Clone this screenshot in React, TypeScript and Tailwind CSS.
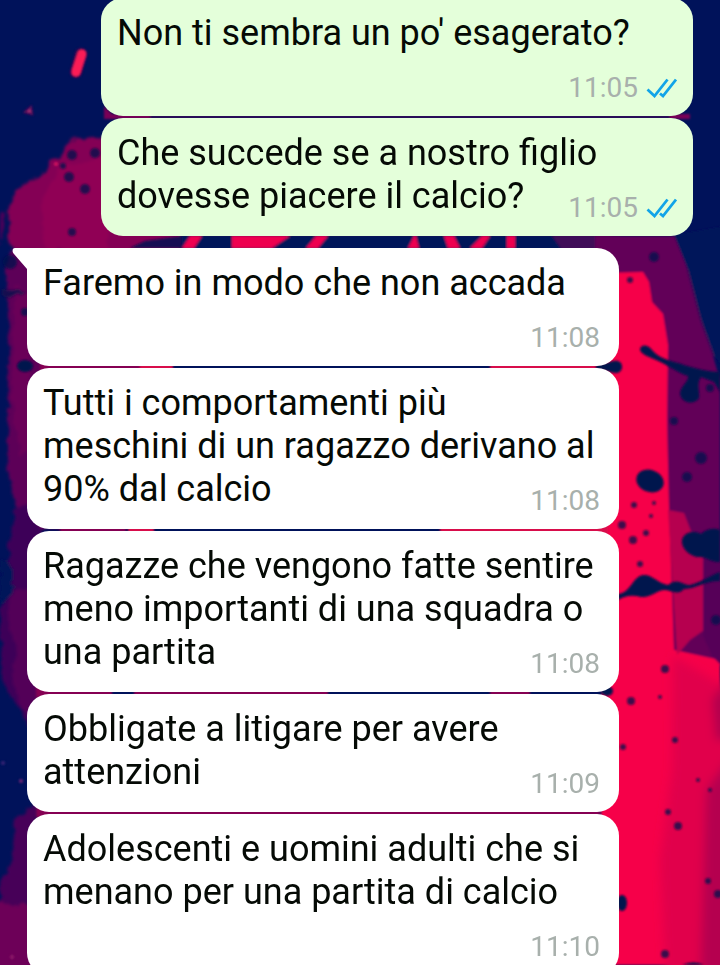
import React from 'react';
import clsx from 'clsx';

type Message = {
  text: string;
  time: string;
  sent?: boolean;
  first?: boolean;
};

const messages: Message[] = [
  { text: "Non ti sembra un po' esagerato?", time: '11:05', sent: true },
  {
    text: 'Che succede se a nostro figlio dovesse piacere il calcio?',
    time: '11:05',
    sent: true,
  },
  { text: 'Faremo in modo che non accada', time: '11:08', first: true },
  {
    text: 'Tutti i comportamenti più meschini di un ragazzo derivano al 90% dal calcio',
    time: '11:08',
  },
  {
    text: 'Ragazze che vengono fatte sentire meno importanti di una squadra o una partita',
    time: '11:08',
  },
  { text: 'Obbligate a litigare per avere attenzioni', time: '11:09' },
  {
    text: 'Adolescenti e uomini adulti che si menano per una partita di calcio',
    time: '11:10',
  },
];

// x, y, radius
const drops = [
  [72, 155, 5], [95, 153, 5], [63, 166, 3], [69, 177, 5], [85, 189, 5],
  [72, 232, 4], [654, 257, 5], [630, 280, 3], [674, 421, 4], [701, 458, 6],
  [687, 477, 5], [634, 505, 3], [654, 503, 2], [651, 516, 2], [622, 525, 4],
  [646, 533, 3], [633, 540, 4], [640, 564, 3], [716, 620, 5], [665, 669, 4],
  [631, 701, 4], [660, 697, 2], [675, 740, 3], [623, 747, 3], [668, 812, 3],
  [678, 826, 4], [698, 780, 2], [710, 790, 2], [708, 881, 3], [718, 894, 4],
  [665, 954, 4], [10, 262, 7], [25, 312, 4], [710, 388, 4],
];

const Wallpaper = () => (
  <svg
    className="absolute inset-0 h-full w-full"
    viewBox="0 0 720 965"
    preserveAspectRatio="xMidYMin slice"
    aria-hidden="true"
  >
    <defs>
      <filter id="rough" x="-5%" y="-5%" width="110%" height="110%">
        <feTurbulence type="fractalNoise" baseFrequency="0.07" numOctaves="3" seed="4" />
        <feDisplacementMap in="SourceGraphic" scale="12" xChannelSelector="R" yChannelSelector="G" />
        <feGaussianBlur stdDeviation="1.4" />
      </filter>
      <filter id="soft">
        <feGaussianBlur stdDeviation="0.9" />
      </filter>
      <filter id="haze">
        <feGaussianBlur stdDeviation="5" />
      </filter>
    </defs>
    <rect width="720" height="965" fill="#00125a" />

    <g filter="url(#rough)">
      <path d="M12 300 8 206 24 184 40 178 46 164 60 158 68 142 104 136H610V300Z" fill="#840055" />
      <path d="M60 166 90 162 108 154V250H44L42 200Z" fill="#900055" />
      <path d="M0 212 5 214 4 238 0 244Z" fill="#4c0058" />
      <path d="M8 250H60V530H24L12 490 8 460Z" fill="#5d0058" />
      <path d="M14 285 30 290V450L20 455 12 400Z" fill="#6b0058" />
      <path d="M14 510 40 500V745L24 720 14 700 4 690 0 640V575L8 560Z" fill="#3c0058" />
      <path d="M8 590H40V730L20 706 12 680 18 650 6 620Z" fill="#520058" />
      <path d="M16 820 36 800V902L0 906V880L10 870Z" fill="#470058" />
      <path d="M-8 904H50V980H-8Z" fill="#6d0058" />
      <path d="M0 560 12 570 14 592 0 604Z" fill="#00125a" />
      <path d="M2 288 28 290 12 298 2 296Z" fill="#13104f" />
    </g>

    <g filter="url(#soft)">
      <path d="M104 106 112 114H690V119H104Z" fill="#790057" />
      <path d="M150 114H670V119H150Z" fill="#2c0e58" />
      <path d="M180 235H620V250H180Z" fill="#00125a" />
      <path d="M182 248 190 236H202L194 248ZM232 236H290L272 248H232ZM306 248 316 236H328L318 248ZM408 248 414 236H416L419 248ZM444 236H454L460 248H448ZM470 248 482 236H490L482 248ZM507 236H515V248H507Z" fill="#ee0650" />
      <path d="M130 248 145 241 182 236V248Z" fill="#121052" />
      <path d="M552 236H600V250H562Z" fill="#3f0b58" />
      <path d="M595 236H684L687 270 700 320 713 356 720 380V660H595Z" fill="#620059" />
      <path d="M685 236 688 270 701 320 714 356" fill="none" stroke="#941052" strokeWidth="1" />
      <path d="M605 273 643 272 649 282 652 302 663 314 668 345 667 420 669 510 674 650 720 660V965H600Z" fill="#f60249" />
      <path d="M674 235 730 225V375L714 356 701 320 688 270Z" fill="#00125a" />
      <path d="M668 510 684 513 692 534 703 546 704 630 690 640 677 655Z" fill="#b6044f" />
      <path d="M703 540H730V675L712 656 703 636Z" fill="#570059" />
      {/* streaks showing between the bubbles */}
      <path d="M40 360H140V372H40ZM60 522H126V534H60ZM36 684H112V698H36ZM134 684H328V698H134ZM490 684H530V698H490ZM36 804H600V818H36Z" fill="#850652" />
      <path d="M140 360H173V372H140ZM490 360H608V372H490ZM128 522H154V534H128ZM440 522H608V534H440Z" fill="#d8104c" />
    </g>

    <g filter="url(#haze)">
      <path d="M673 656 730 690V985H666L660 860 672 770Z" fill="#e1034c" />
      <path d="M706 790 735 750V985H700Z" fill="#b5034f" />
      <path d="M712 700 735 670V740H716Z" fill="#b2034d" />
    </g>

    <g fill="#02124e" filter="url(#soft)">
      <path d="M640 350C640 344 648 344 652 350 660 360 674 361 684 365 698 369 709 372 720 372V392L714 382 701 377C696 384 700 391 699 398 695 405 682 404 680 394 680 386 689 382 688 376 678 373 668 365 656 360 648 356 642 355 640 350Z" />
      <ellipse cx="650" cy="481" rx="14" ry="11" transform="rotate(20 650 481)" />
      <path d="M682 540C684 532 694 530 701 534 707 528 715 528 720 530V562C709 562 706 556 699 557 691 557 681 549 682 540Z" />
      <path d="M618 594C631 593 632 577 643 575 652 574 657 583 668 585 678 577 682 585 690 585 704 581 711 575 720 572V581C707 580 698 588 684 589 678 596 671 590 664 590 655 591 651 598 641 597 633 595 626 595 618 600Z" />
      <path d="M596 364C608 365 613 358 620 362 624 366 622 373 616 373 608 373 603 368 596 370Z" />
      <ellipse cx="25" cy="366" rx="8" ry="6" />
      <ellipse cx="622" cy="903" rx="5" ry="8" />
      <ellipse cx="607" cy="691" rx="6" ry="5" />
      <path d="M682 965Q694 960 704 965Z" />
      {drops.map(([x, y, r]) => (
        <circle key={`${x}-${y}`} cx={x} cy={y} r={r} opacity="0.75" />
      ))}
    </g>

    <g filter="url(#soft)">
      <path d="M81 54 76 72" stroke="#40084f" strokeWidth="12" strokeLinecap="round" />
      <path d="M82 54 76 72" stroke="#fb1a56" strokeWidth="9" strokeLinecap="round" />
      <path d="M25 112 31 107 32 114Z" fill="#b03a7c" stroke="#5e0b59" strokeWidth="2" />
      <circle cx="56" cy="164" r="2" fill="#d71b60" />
      <circle cx="21" cy="781" r="2" fill="#702573" />
      <circle cx="3" cy="763" r="2" fill="#382474" />
      <circle cx="12" cy="957" r="2" fill="#91206a" />
    </g>
  </svg>
);

const ReadTicks = () => (
  <svg className="h-5 w-[31px]" viewBox="0 0 31 20" fill="none" stroke="#12a4e8" strokeWidth="2.8" role="img" aria-label="Letto">
    <path d="M1.5 11.5 8.5 18 21.5 1.5" />
    <path d="M14 15.5 17 18 30 1.5" />
  </svg>
);

const Bubble = ({ text, time, sent, first }: Message) => (
  <li
    className={clsx(
      'relative flow-root w-[592px] max-w-full rounded-[22px] pl-4 pt-3.5 pb-3 text-4xl leading-[43px] text-[#050a05]',
      sent ? 'self-end bg-[#e4ffda] pr-4' : 'self-start bg-white pr-5',
      first && 'mt-2.5 rounded-tl-none',
    )}
  >
    {first && (
      <svg className="absolute top-0 right-full h-6 w-4" viewBox="0 0 16 24" fill="#fff" aria-hidden="true">
        <path d="M16 0H4C1 0 1 4 3 6L16 21Z" />
      </svg>
    )}
    {text}
    {/* sits on the last line when there is room, drops below otherwise */}
    <span
      className={clsx(
        'float-right mt-[17px] flex items-center gap-2 text-[#a8b0ac]',
        !sent && '-mr-px',
      )}
    >
      <time className="text-[28px] leading-8">{time}</time>
      {sent && <ReadTicks />}
    </span>
  </li>
);

const App = () => {
  return (
    <main className="relative h-screen overflow-hidden bg-[#00125a] font-[Roboto,sans-serif]">
      <Wallpaper />
      <ul className="relative -mt-0.5 flex flex-col gap-0.5 px-[27px]">
        {messages.map((message) => (
          <Bubble key={message.text} {...message} />
        ))}
      </ul>
    </main>
  );
};

export default App;
